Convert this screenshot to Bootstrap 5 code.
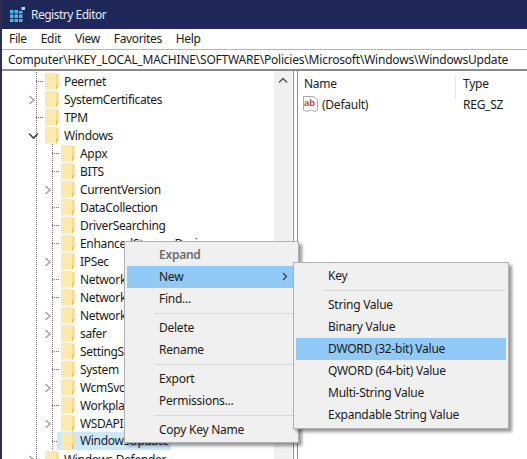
<!DOCTYPE html>
<html lang="en">
<head>
    <meta charset="UTF-8">
    <meta name="viewport" content="width=device-width, initial-scale=1.0">
    <title>Registry Editor</title>
    <link href="https://cdn.jsdelivr.net/npm/bootstrap@5.3.0/dist/css/bootstrap.min.css" rel="stylesheet">
    <style>
        html, body { height: 459px; overflow: hidden; }
        body { position: relative; font-family: "Noto Sans", "Open Sans", sans-serif; font-size: 12px; letter-spacing: -.25px; line-height: 18px; color: #1a1a1a; background: #fff; border-left: 2px solid #2b3050; }
        .title-bar { height: 29px; background: #20285a; color: #e6e8f0; font-size: 12px; letter-spacing: -.5px; padding-left: 8px; gap: 6px; }
        .menu-bar { height: 20px; gap: 14px; padding-left: 7px; letter-spacing: -.35px; }
        .address { height: 22px; border-top: 1px solid #b4b4b4; border-bottom: 2px solid #8c8c8c; padding-left: 6px; white-space: nowrap; letter-spacing: -.21px; }
        .main { height: 388px; }
        .tree { width: 272px; padding-top: 1px; letter-spacing: -.33px; }
        .tree-row { height: 18px; white-space: nowrap; background-repeat: no-repeat; padding-top: 1px; }
        .l1 { padding-left: 26px; }
        .l2 { padding-left: 42px; }
        .lines-a { background-image: repeating-linear-gradient(to bottom, #777 0 1px, transparent 1px 2px); background-size: 1px 100%; background-position: 34px 0; }
        .lines-b { background-image: repeating-linear-gradient(to bottom, #777 0 1px, transparent 1px 2px), repeating-linear-gradient(to right, #777 0 1px, transparent 1px 2px); background-size: 1px 100%, 8px 1px; background-position: 34px 0, 34px 9px; }
        .lines-c { background-image: repeating-linear-gradient(to bottom, #777 0 1px, transparent 1px 2px), repeating-linear-gradient(to bottom, #777 0 1px, transparent 1px 2px); background-size: 1px 100%, 1px 100%; background-position: 34px 0, 50px 0; }
        .lines-d { background-image: repeating-linear-gradient(to bottom, #777 0 1px, transparent 1px 2px), repeating-linear-gradient(to bottom, #777 0 1px, transparent 1px 2px), repeating-linear-gradient(to right, #777 0 1px, transparent 1px 2px); background-size: 1px 100%, 1px 100%, 8px 1px; background-position: 34px 0, 50px 0, 50px 9px; }
        .twig { width: 17px; flex: none; }
        .folder { flex: none; margin-right: 5px; }
        .selected { background: #cce8ff; margin-left: -4px; height: 18px; padding: 0 3px 0 4px; margin-top: -1px; }
        .scroll-track { width: 18px; background: #f0f0f0; padding-top: 6px; text-align: center; }
        .splitter { width: 5px; border-left: 1px solid #8c8c8c; border-right: 1px solid #8c8c8c; margin-left: 1px; }
        .list-pane { padding: 0 0 0 6px; }
        .list-head { height: 25px; padding-top: 4px; }
        .col-name { width: 152px; border-right: 1px solid #e5e5e5; height: 24px; }
        .col-type { padding-left: 7px; }
        .list-row { height: 18px; }
        .list-row .col-name { height: 18px; border: 0; }
        .val-icon { flex: none; margin: 0 4px 0 -1px; }
        .ctx { position: absolute; display: block; min-width: 0; padding: 2px 0 0; margin: 0; font-size: 12px; line-height: 22px; color: #1a1a1a; background: #f0f0f0; border: 1px solid #b0b0b0; border-radius: 0; box-shadow: 3px 3px 3px rgba(0,0,0,.4); }
        .ctx-main { left: 122px; top: 241px; width: 175px; height: 202px; }
        .ctx-sub { left: 291px; top: 262px; width: 216px; height: 167px; }
        .ctx .dropdown-item { height: 22px; padding: 0 0 0 32px; margin: 0 2px; width: auto; color: #1a1a1a; font-size: 12px; line-height: 21px; }
        .ctx .dropdown-item.disabled { color: #6d6d6d; font-weight: 600; background: none; }
        .ctx .dropdown-item.active { background: #91c9f7; color: #1a1a1a; }
        .ctx .has-sub { padding-bottom: 1px; }
        .ctx .dropdown-divider { margin: 3px 2px 3px 30px; border-top: 1px solid #d7d7d7; opacity: 1; }
    </style>
</head>
<body>
    <svg width="0" height="0" class="position-absolute">
        <symbol id="fld" viewBox="0 0 14 17">
            <path d="M0 0H10L11 1H13.500V12L11 16.500H0Z" fill="#fbe9ae"/>
            <path d="M11 1H13.500V12H11Z" fill="#f8dc8c"/>
            <path d="M11 12H13.500L11.500 16.500H11Z" fill="#eec04e"/>
        </symbol>
        <symbol id="chev" viewBox="0 0 8 10">
            <path d="M1.500 1L6 5L1.500 9" fill="none" stroke="#a6a6a6" stroke-width="1.600"/>
        </symbol>
    </svg>

    <div class="title-bar d-flex align-items-center">
        <svg width="15" height="15" viewBox="0 0 15 15">
            <path d="M0 3H3.500V6.500H0ZM4.500 3H8V6.500H4.500ZM9 4H12.500V6.500H9ZM0 7.500H3.500V11H0ZM4.500 7.500H8V11H4.500ZM9 7.500H12.500V11H9ZM0 12H3.500V15H0ZM4.500 12H8V15H4.500ZM9 12H12.500V15H9Z" fill="#46b9ee"/>
            <path d="M11.500 0H15V3H11.500Z" fill="#a8e0f8"/>
        </svg>
        <span>Registry Editor</span>
    </div>

    <div class="menu-bar d-flex align-items-center">
        <span>File</span><span>Edit</span><span>View</span><span>Favorites</span><span>Help</span>
    </div>

    <div class="address d-flex align-items-center">Computer\HKEY_LOCAL_MACHINE\SOFTWARE\Policies\Microsoft\Windows\WindowsUpdate</div>

    <div class="main d-flex">
        <div class="tree overflow-hidden">
            <div class="tree-row l1 lines-b d-flex align-items-center"><span class="twig"></span><svg class="folder" width="14" height="17"><use href="#fld"/></svg>Peernet</div>
            <div class="tree-row l1 lines-a d-flex align-items-center"><span class="twig"><svg width="8" height="10"><use href="#chev"/></svg></span><svg class="folder" width="14" height="17"><use href="#fld"/></svg>SystemCertificates</div>
            <div class="tree-row l1 lines-b d-flex align-items-center"><span class="twig"></span><svg class="folder" width="14" height="17"><use href="#fld"/></svg>TPM</div>
            <div class="tree-row l1 d-flex align-items-center lines-a"><span class="twig"><svg width="11" height="8" viewBox="0 0 11 8"><path d="M1 1.500L5.500 6L10 1.500" fill="none" stroke="#404040" stroke-width="1.600"/></svg></span><svg class="folder" width="14" height="17"><use href="#fld"/></svg>Windows</div>
            <div class="tree-row l2 lines-d d-flex align-items-center"><span class="twig"></span><svg class="folder" width="14" height="17"><use href="#fld"/></svg>Appx</div>
            <div class="tree-row l2 lines-d d-flex align-items-center"><span class="twig"></span><svg class="folder" width="14" height="17"><use href="#fld"/></svg>BITS</div>
            <div class="tree-row l2 lines-c d-flex align-items-center"><span class="twig"><svg width="8" height="10"><use href="#chev"/></svg></span><svg class="folder" width="14" height="17"><use href="#fld"/></svg>CurrentVersion</div>
            <div class="tree-row l2 lines-d d-flex align-items-center"><span class="twig"></span><svg class="folder" width="14" height="17"><use href="#fld"/></svg>DataCollection</div>
            <div class="tree-row l2 lines-d d-flex align-items-center"><span class="twig"></span><svg class="folder" width="14" height="17"><use href="#fld"/></svg>DriverSearching</div>
            <div class="tree-row l2 lines-d d-flex align-items-center"><span class="twig"></span><svg class="folder" width="14" height="17"><use href="#fld"/></svg>EnhancedStorageDevices</div>
            <div class="tree-row l2 lines-c d-flex align-items-center"><span class="twig"><svg width="8" height="10"><use href="#chev"/></svg></span><svg class="folder" width="14" height="17"><use href="#fld"/></svg>IPSec</div>
            <div class="tree-row l2 lines-d d-flex align-items-center"><span class="twig"></span><svg class="folder" width="14" height="17"><use href="#fld"/></svg>NetworkConnections</div>
            <div class="tree-row l2 lines-d d-flex align-items-center"><span class="twig"></span><svg class="folder" width="14" height="17"><use href="#fld"/></svg>NetworkProvider</div>
            <div class="tree-row l2 lines-c d-flex align-items-center"><span class="twig"><svg width="8" height="10"><use href="#chev"/></svg></span><svg class="folder" width="14" height="17"><use href="#fld"/></svg>NetworkTopology</div>
            <div class="tree-row l2 lines-c d-flex align-items-center"><span class="twig"><svg width="8" height="10"><use href="#chev"/></svg></span><svg class="folder" width="14" height="17"><use href="#fld"/></svg>safer</div>
            <div class="tree-row l2 lines-d d-flex align-items-center"><span class="twig"></span><svg class="folder" width="14" height="17"><use href="#fld"/></svg>SettingSync</div>
            <div class="tree-row l2 lines-d d-flex align-items-center"><span class="twig"></span><svg class="folder" width="14" height="17"><use href="#fld"/></svg>System</div>
            <div class="tree-row l2 lines-c d-flex align-items-center"><span class="twig"><svg width="8" height="10"><use href="#chev"/></svg></span><svg class="folder" width="14" height="17"><use href="#fld"/></svg>WcmSvc</div>
            <div class="tree-row l2 lines-d d-flex align-items-center"><span class="twig"></span><svg class="folder" width="14" height="17"><use href="#fld"/></svg>WorkplaceJoin</div>
            <div class="tree-row l2 lines-c d-flex align-items-center"><span class="twig"><svg width="8" height="10"><use href="#chev"/></svg></span><svg class="folder" width="14" height="17"><use href="#fld"/></svg>WSDAPI</div>
            <div class="tree-row l2 lines-d d-flex align-items-center"><span class="twig"></span><span class="selected d-flex align-items-center"><svg class="folder" width="14" height="17"><use href="#fld"/></svg>WindowsUpdate</span></div>
            <div class="tree-row l1 lines-a d-flex align-items-center"><span class="twig"><svg width="8" height="10"><use href="#chev"/></svg></span><svg class="folder" width="14" height="17"><use href="#fld"/></svg>Windows Defender</div>
        </div>
        <div class="scroll-track">
            <svg width="10" height="7" viewBox="0 0 10 7" class="d-block mx-auto"><path d="M1 5.500L5 1.500L9 5.500" fill="none" stroke="#555" stroke-width="1.500"/></svg>
        </div>
        <div class="splitter"></div>
        <div class="list-pane flex-grow-1">
            <div class="list-head d-flex">
                <div class="col-name">Name</div>
                <div class="col-type">Type</div>
            </div>
            <div class="list-row d-flex">
                <div class="col-name d-flex align-items-start">
                    <svg class="val-icon" width="15" height="16" viewBox="0 0 15 16"><path d="M.5 .5H11L14.500 4V14L12 15.500L8 14L4 15.500L.5 14Z" fill="#fff" stroke="#a9a9a9"/><text x="1" y="10" font-family="Liberation Sans, sans-serif" font-size="9.500" font-weight="700" letter-spacing="0" fill="#c4472b">ab</text></svg>
                    <span>(Default)</span>
                </div>
                <div class="col-type">REG_SZ</div>
            </div>
        </div>
    </div>

    <div class="dropdown-menu ctx ctx-main">
        <a class="dropdown-item disabled">Expand</a>
        <a class="dropdown-item active has-sub d-flex justify-content-between align-items-center pe-2">New <svg width="6" height="9" viewBox="0 0 6 9"><path d="M1 1L4.500 4.500L1 8" fill="none" stroke="#333" stroke-width="1.100"/></svg></a>
        <a class="dropdown-item">Find...</a>
        <hr class="dropdown-divider">
        <a class="dropdown-item">Delete</a>
        <a class="dropdown-item">Rename</a>
        <hr class="dropdown-divider">
        <a class="dropdown-item">Export</a>
        <a class="dropdown-item">Permissions...</a>
        <hr class="dropdown-divider">
        <a class="dropdown-item">Copy Key Name</a>
    </div>

    <div class="dropdown-menu ctx ctx-sub">
        <a class="dropdown-item">Key</a>
        <hr class="dropdown-divider">
        <a class="dropdown-item">String Value</a>
        <a class="dropdown-item">Binary Value</a>
        <a class="dropdown-item active">DWORD (32-bit) Value</a>
        <a class="dropdown-item">QWORD (64-bit) Value</a>
        <a class="dropdown-item">Multi-String Value</a>
        <a class="dropdown-item">Expandable String Value</a>
    </div>

    <script src="https://cdn.jsdelivr.net/npm/bootstrap@5.3.0/dist/js/bootstrap.bundle.min.js"></script>
</body>
</html>
